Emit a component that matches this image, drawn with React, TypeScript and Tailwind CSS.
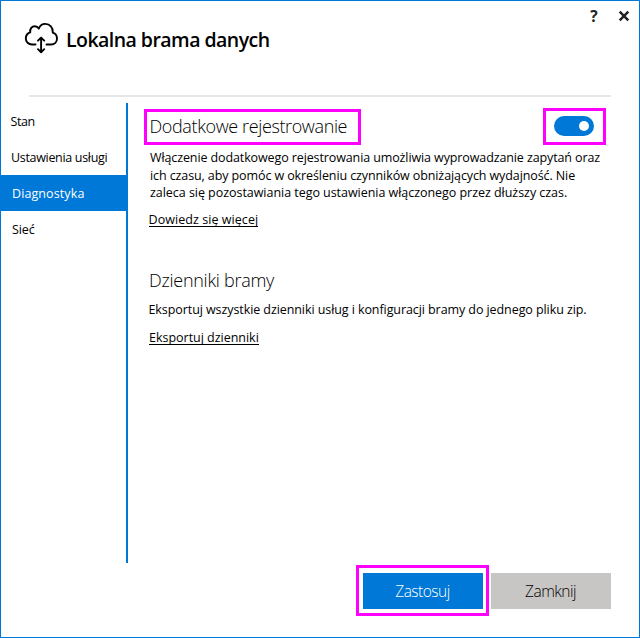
import React from "react";

const navItems = [
  { label: "Stan", style: "pl-[9.500px] tracking-[-0.45px]" },
  { label: "Ustawienia usługi", style: "pl-[10px] tracking-[-0.32px]" },
  { label: "Diagnostyka", style: "pl-[11px] tracking-[0.1px] bg-[#0078d7] text-white" },
  { label: "Sieć", style: "pl-[11px] tracking-[-0.1px]" },
];

function CloudIcon() {
  return (
    <svg
      className="mt-[20px] ml-[22px] h-[34px] w-[36px] shrink-0"
      viewBox="0 0 36 34"
      fill="none"
      stroke="#000"
      strokeWidth="1.9"
      strokeLinecap="round"
      strokeLinejoin="round"
    >
      <path d="M12.500 23.500H9C5.500 23.500 2.800 20.900 2.800 17.500C2.800 14.700 4.500 12.300 7.200 11.400C6.800 7.600 8.900 5.300 11.800 5.300C13.500 5.300 15 6.200 15.800 7.600C17 4.500 19.300 2.900 22.300 2.900C26.700 2.900 30.300 6.400 29.800 11.600C32.500 12.500 34 14.700 34 17.500C34 21 31.500 23.500 28 23.500H23.500" />
      <path d="M18.100 17V31M15 19.700L18.100 16.600L21.200 19.700M15 28.200L18.100 31.300L21.200 28.200" />
    </svg>
  );
}

function Header() {
  return (
    <header className="flex h-[94px] items-start">
      <CloudIcon />
      <h1 className="mt-[24px] ml-[7px] text-[19.500px] leading-[30px] font-[570] tracking-[-0.54px] text-black">
        Lokalna brama danych
      </h1>
      <div className="mt-[7px] mr-[9px] ml-auto flex items-center">
        <button className="w-3 text-[15.500px] leading-4 font-bold text-[#222]">?</button>
        <button className="ml-[18px]" aria-label="Zamknij okno">
          <svg className="block h-3 w-3" viewBox="0 0 12 12" stroke="#222" strokeWidth="2.500">
            <path d="M1.700 1.700L10.300 10.300M10.300 1.700L1.700 10.300" />
          </svg>
        </button>
      </div>
    </header>
  );
}

export default function App() {
  return (
    <div className="flex h-[638px] w-[640px] flex-col border border-[#0078d7] bg-white font-['Open_Sans','Noto_Sans',sans-serif] whitespace-nowrap text-black">
      <Header />
      <div className="mr-[28px] ml-[28px] h-[2px] shrink-0 bg-[#e6e6e6]" />
      <div className="mt-[6px] flex h-[460px] shrink-0">
        <nav className="w-[125px] text-[12.500px] leading-[38px] font-[370]">
          {navItems.map((item) => (
            <div key={item.label} className={`h-9 ${item.style}`}>
              {item.label}
            </div>
          ))}
        </nav>
        <div className="w-[2px] bg-[#0078d7]" />
        <main className="ml-[16px] w-[462px] pt-[5px] text-[12.500px] font-[370]">
          <div className="flex h-[37px] items-end justify-between">
            <h2 className="h-[36px] w-[217px] border-[3px] border-[#ff00ff] pl-[2.500px] text-[18px] leading-[29px] font-[360] tracking-[-0.38px]">
              Dodatkowe rejestrowanie
            </h2>
            <div className="flex h-[37px] w-[63px] border-[3px] border-[#ff00ff] pt-[5px] pl-[8px]">
              <div className="flex h-5 w-10 items-center justify-end rounded-full bg-[#0078d7] pr-[5px]">
                <span className="h-[10px] w-[10px] rounded-full bg-white" />
              </div>
            </div>
          </div>
          <p className="mt-[4px] ml-[6px] leading-[17.500px]">
            <span className="tracking-[-0.11px]">Włączenie dodatkowego rejestrowania umożliwia wyprowadzanie zapytań oraz</span>
            <br />
            <span className="tracking-[-0.1px]">ich czasu, aby pomóc w określeniu czynników obniżających wydajność. Nie</span>
            <br />
            <span className="tracking-[-0.04px]">zaleca się pozostawiania tego ustawienia włączonego przez dłuższy czas.</span>
          </p>
          <div className="mt-[9px] ml-[4.500px] flex h-[18px]">
            <a className="h-[16px] border-b border-black leading-[18px] tracking-[0.06px]">Dowiedz się więcej</a>
          </div>
          <h2 className="mt-[37px] ml-[5px] text-[18px] leading-[28px] font-[360] tracking-[-0.27px]">Dzienniki bramy</h2>
          <p className="mt-[7px] ml-[4.500px] leading-[18px] tracking-[-0.08px]">
            Eksportuj wszystkie dzienniki usług i konfiguracji bramy do jednego pliku zip.
          </p>
          <div className="mt-[10px] ml-[5px] flex h-[18px]">
            <a className="h-[16px] border-b border-black leading-[18px] tracking-[-0.02px]">Eksportuj dzienniki</a>
          </div>
        </main>
      </div>
      <footer className="mt-[2px] mr-[28px] flex justify-end gap-[2px] text-[15.500px] font-[360] tracking-[-0.5px]">
        <div className="h-[51px] w-[133px] border-[3px] border-[#ff00ff] pt-[5px] pl-[4px]">
          <button className="block h-9 w-[120px] bg-[#0078d7] pr-[1px] leading-[37px] text-white">Zastosuj</button>
        </div>
        <button className="mt-[8px] block h-9 w-[120px] bg-[#c8c6c4] pr-[1px] leading-[37px]">Zamknij</button>
      </footer>
    </div>
  );
}
